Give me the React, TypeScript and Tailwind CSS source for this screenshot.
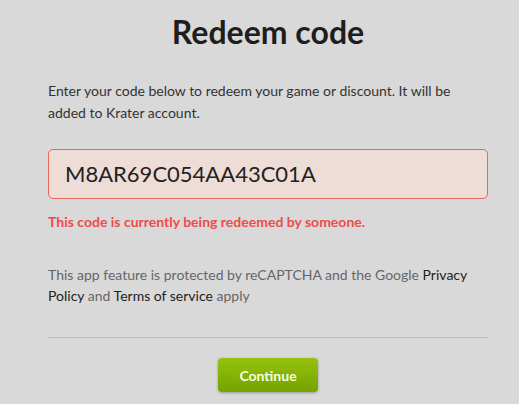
export default function App() {
  return (
    <div className="min-h-screen w-full bg-[#d9d9d9] font-['Lato',sans-serif]">
      <div className="ml-[48px] w-[440px] pt-[12px]">
        <h1 className="text-center text-[32px] font-bold leading-[40px] text-[#1e1e1e]">Redeem code</h1>
        <p className="mt-[28px] text-[14px] leading-[22px] text-[#333]">
          Enter your code below to redeem your game or discount. It will be added to Krater account.
        </p>
        <div className="mt-[25px] flex h-[50px] items-center rounded-[5px] border border-[#e8675f] bg-[#eedcd6] px-[16px]">
          <span className="text-[22px] leading-none text-[#222]">M8AR69C054AA43C01A</span>
        </div>
        <p className="mt-[13px] text-[14px] font-bold leading-[20px] text-[#ee4b4b]">
          This code is currently being redeemed by someone.
        </p>
        <p className="mt-[32px] text-[14px] leading-[21px] text-[#666]">
          This app feature is protected by reCAPTCHA and the Google <span className="text-[#222]">Privacy Policy</span> and{" "}
          <span className="text-[#222]">Terms of service</span> apply
        </p>
        <div className="mt-[31px] h-px bg-[#b9b9b9]" />
        <div className="mt-[20px] flex justify-center">
          <button className="h-[34px] w-[100px] rounded-[4px] bg-gradient-to-b from-[#96c20e] to-[#74a300] text-[14px] font-bold text-[#f4ffe0] shadow-[0_1px_3px_rgba(0,0,0,0.3)]">
            Continue
          </button>
        </div>
      </div>
    </div>
  );
}
